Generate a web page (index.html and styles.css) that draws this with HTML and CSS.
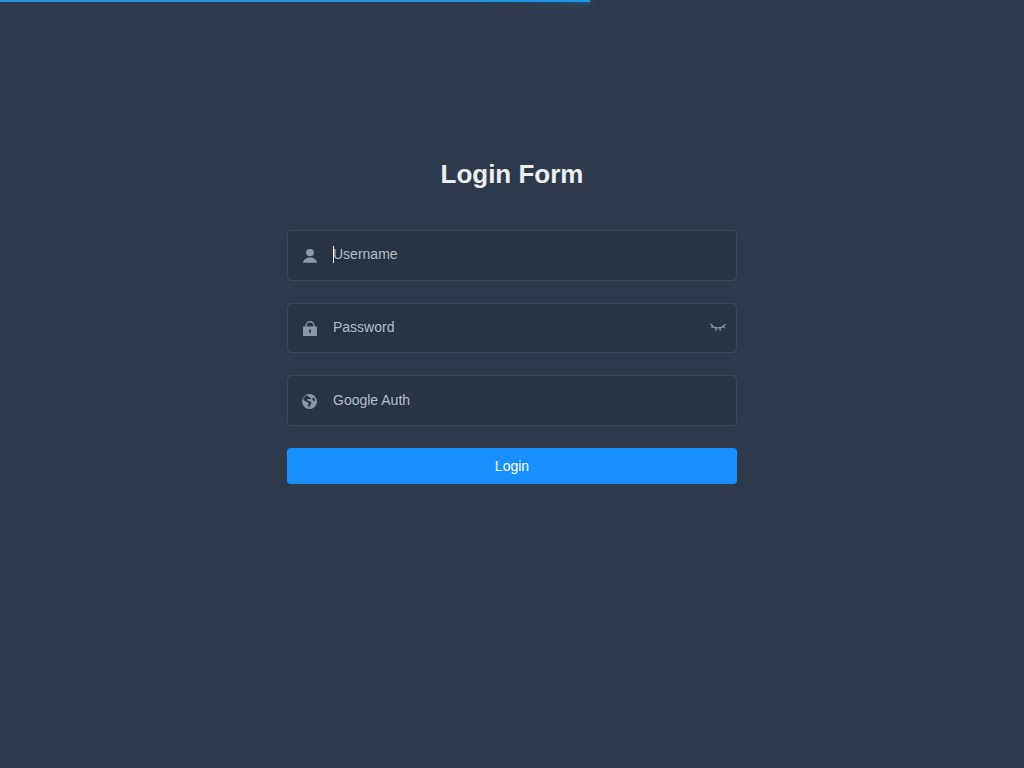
FILE: index.html
```html
<!DOCTYPE html>
<html lang="en">
<head>
    <meta charset="UTF-8">
    <meta name="viewport" content="width=device-width, initial-scale=1.0">
    <title>Login Form</title>
    <link rel="stylesheet" href="styles.css">
</head>
<body>
    <div class="progress"><div class="peg"></div></div>

    <form class="login-form" onsubmit="return false">
        <h3 class="title">Login Form</h3>

        <div class="form-item">
            <span class="icon">
                <svg viewBox="0 0 14 14" width="14" height="14"><ellipse cx="7" cy="3.500" rx="4" ry="3.700"/><path d="M0 14c0-2.800 2.800-5.400 7-5.400s7 2.600 7 5.400z" transform="translate(0 -0.200)"/></svg>
            </span>
            <span class="field">
                <input type="text" placeholder="Username">
                <span class="caret"></span>
            </span>
        </div>

        <div class="form-item">
            <span class="icon">
                <svg viewBox="0 0 14 15" width="14" height="15"><path d="M1 5.500h1.300V4.700a4.700 4.700 0 0 1 9.400 0v.8H13a1 1 0 0 1 1 1V14a1 1 0 0 1-1 1H1a1 1 0 0 1-1-1V6.500a1 1 0 0 1 1-1zm2.700 0h6.600v-.8a3.300 3.300 0 0 0-6.600 0zM7 8.600a1.200 1.200 0 0 0-.6 2.200V12.600h1.200v-1.800A1.200 1.200 0 0 0 7 8.600z" fill-rule="evenodd"/></svg>
            </span>
            <span class="field">
                <input type="password" placeholder="Password">
            </span>
            <span class="show-pwd">
                <svg viewBox="0 0 16 9" width="16" height="9"><path d="M1.500 3c3.500 2.600 9.500 2.600 13 0M.5 1l2.500 2.200M15.500 1L13 3.200M1.800 2.800l.4 2.400M14.200 2.800l-.4 2.400M5.700 4.500l.2 3.500M10.300 4.500l-.2 3.500" fill="none" stroke-width="1.200"/></svg>
            </span>
        </div>

        <div class="form-item">
            <span class="icon">
                <svg viewBox="0 0 15 15" width="15" height="15"><path d="M7.500 0a7.500 7.500 0 1 1 0 15 7.500 7.500 0 0 1 0-15zM4.800 1.300C3 2.200 1.600 3.900 1.100 5.800l2.700 1.800 1.500.4 1.200 1.600-.6 2.400 1 1.200 1.500-2.200 1.100-2.200-1.500-1.500-2.100-.5-.9-1.400 1.600-.6 1.700.7.800-1.200L6.400 2.500zm6.500 2.200-1.200 1.200 1.100 2 2 .4c0-1.500-.7-2.800-1.900-3.600z" fill-rule="evenodd"/></svg>
            </span>
            <span class="field">
                <input type="text" placeholder="Google Auth">
            </span>
        </div>

        <button class="login-btn" type="submit">Login</button>
    </form>
</body>
</html>
```

FILE: styles.css
```css
*{
    margin: 0px;
    padding: 0px;
    box-sizing: border-box;
}
body{
    min-height: 100vh;
    background-color: #2d3a4b;
    font-family: "Liberation Sans", Arial, sans-serif;
    overflow: hidden;
}
.progress{
    position: fixed;
    top: 0;
    left: 0;
    width: 590px;
    height: 2px;
    background-color: #1f96e6;
}
.peg{
    position: absolute;
    right: 0;
    width: 100px;
    height: 100%;
    box-shadow: 0 0 10px #1f96e6, 0 0 5px #1f96e6;
    transform: rotate(3deg) translate(0px, -4px);
}
.login-form{
    width: 450px;
    margin: 0 auto;
    padding-top: 159px;
}
.title{
    font-size: 26px;
    font-weight: bold;
    line-height: 30px;
    color: #eeeeee;
    text-align: center;
    margin-bottom: 41px;
}
.form-item{
    display: flex;
    align-items: center;
    height: 50.67px;
    margin-bottom: 22px;
    background-color: rgba(0, 0, 0, 0.1);
    border: 1px solid rgba(255, 255, 255, 0.1);
    border-radius: 5px;
    color: #889aa4;
}
.icon{
    display: flex;
    flex: 0 0 45px;
    justify-content: center;
    padding: 2px 2px 0px 0px;
    fill: #889aa4;
}
.field{
    position: relative;
    display: flex;
    flex: 1;
    min-width: 0;
}
input{
    width: 100%;
    height: 47px;
    background: transparent;
    border: none;
    outline: none;
    font-family: inherit;
    font-size: 14px;
    color: #ffffff;
    margin-top: -2px;
}
input::placeholder{
    color: #b6bdc6;
    opacity: 1;
}
.caret{
    position: absolute;
    left: 0;
    top: 13px;
    width: 1px;
    height: 17px;
    background-color: #ffffff;
}
.show-pwd{
    display: flex;
    flex: 0 0 26px;
    margin-left: -26px;
    stroke: #889aa4;
}
.login-btn{
    display: block;
    width: 100%;
    height: 36px;
    background-color: #1890ff;
    border: none;
    border-radius: 4px;
    color: #ffffff;
    font-family: inherit;
    font-size: 14px;
    cursor: pointer;
}
```
